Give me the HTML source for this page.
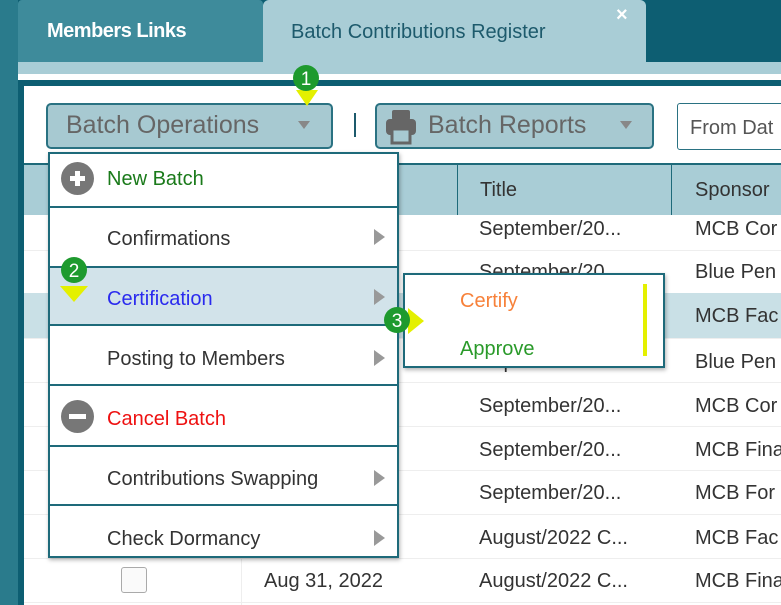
<!DOCTYPE html>
<html><head><style>
*{margin:0;padding:0;box-sizing:border-box}
body{width:781px;height:605px;overflow:hidden;position:relative;background:#0d5e72;font-family:"Liberation Sans",sans-serif}
.a{position:absolute}
.t{font-size:20px;color:#333;white-space:nowrap}
</style></head><body>
<div class="a" style="left:0;top:0;width:18px;height:605px;background:#2a7b8c"></div>
<div class="a" style="left:18px;top:0;width:245px;height:62px;background:#3e8b9b;border-radius:4px 4px 0 0"></div>
<div class="a" style="left:47px;top:20px;font-size:20px;font-weight:bold;color:#fff;letter-spacing:-0.5px">Members Links</div>
<div class="a" style="left:263px;top:0;width:383px;height:62px;background:#a9cdd6;border-radius:6px 6px 0 0"></div>
<div class="a" style="left:291px;top:21px;font-size:20px;color:#1d5a6c">Batch Contributions Register</div>
<div class="a" style="left:616px;top:4px;font-size:20px;color:#fff;font-weight:bold">×</div>
<div class="a" style="left:18px;top:62px;width:763px;height:12px;background:#a9cdd6"></div>
<div class="a" style="left:18px;top:74px;width:763px;height:6px;background:#fff"></div>
<div class="a" style="left:18px;top:80px;width:763px;height:525px;background:#fff;border-top:6px solid #0d5e72;border-left:6px solid #0d5e72;border-radius:6px 0 0 0"></div>
<!-- toolbar -->
<div class="a" style="left:46px;top:103px;width:287px;height:46px;background:#a7c9d1;border:2px solid #2a7282;border-radius:5px"></div>
<div class="a t" style="left:66px;top:111px;font-size:25px;color:#666">Batch Operations</div>
<div class="a" style="left:298px;top:121px;border-left:6px solid transparent;border-right:6px solid transparent;border-top:8px solid #888"></div>
<div class="a" style="left:354px;top:113px;width:2px;height:24px;background:#1d5a6c"></div>
<div class="a" style="left:375px;top:103px;width:279px;height:46px;background:#a7c9d1;border:2px solid #2a7282;border-radius:5px"></div>
<svg class="a" style="left:383px;top:107px" width="36" height="40" viewBox="0 0 36 40"><rect x="9" y="3" width="18" height="10" rx="2" fill="#666"/><rect x="3" y="12" width="30" height="16" rx="4" fill="#666"/><rect x="9" y="22" width="18" height="14" fill="#a7c9d1" stroke="#666" stroke-width="3"/></svg>
<div class="a t" style="left:428px;top:111px;font-size:25px;color:#666">Batch Reports</div>
<div class="a" style="left:620px;top:121px;border-left:6px solid transparent;border-right:6px solid transparent;border-top:8px solid #888"></div>
<div class="a" style="left:677px;top:103px;width:110px;height:47px;background:#fff;border:1px solid #2a7282;border-radius:3px"></div>
<div class="a t" style="left:690px;top:117px;color:#555">From Dat</div>
<!-- table header -->
<div class="a" style="left:24px;top:163px;width:757px;height:52px;background:#a9cdd6;border-top:2px solid #1e6a7a"></div>
<div class="a" style="left:457px;top:165px;width:1px;height:50px;background:#1e6a7a"></div>
<div class="a" style="left:671px;top:165px;width:1px;height:50px;background:#1e6a7a"></div>
<div class="a t" style="left:480px;top:179px">Title</div>
<div class="a t" style="left:695px;top:179px">Sponsor</div>
<!-- rows -->
<div class="a" style="left:24px;top:293px;width:757px;height:45px;background:#c9e0e6"></div>
<div class="a" style="left:24px;top:250px;width:757px;height:1px;background:#eee"></div>
<div class="a" style="left:24px;top:338px;width:757px;height:1px;background:#eee"></div>
<div class="a" style="left:24px;top:382px;width:757px;height:1px;background:#eee"></div>
<div class="a" style="left:24px;top:426px;width:757px;height:1px;background:#eee"></div>
<div class="a" style="left:24px;top:470px;width:757px;height:1px;background:#eee"></div>
<div class="a" style="left:24px;top:514px;width:757px;height:1px;background:#eee"></div>
<div class="a" style="left:24px;top:558px;width:757px;height:1px;background:#eee"></div>
<div class="a" style="left:24px;top:602px;width:757px;height:1px;background:#eee"></div>
<div class="a" style="left:241px;top:558px;width:1px;height:47px;background:#eee"></div>
<div class="a t" style="left:479px;top:218px">September/20...</div><div class="a t" style="left:695px;top:218px">MCB Cor</div>
<div class="a t" style="left:479px;top:261px">September/20...</div><div class="a t" style="left:695px;top:261px">Blue Pen</div>
<div class="a t" style="left:695px;top:305px">MCB Fac</div>
<div class="a t" style="left:479px;top:351px">September/20...</div><div class="a t" style="left:695px;top:351px">Blue Pen</div>
<div class="a t" style="left:479px;top:395px">September/20...</div><div class="a t" style="left:695px;top:395px">MCB Cor</div>
<div class="a t" style="left:479px;top:439px">September/20...</div><div class="a t" style="left:695px;top:439px">MCB Fina</div>
<div class="a t" style="left:479px;top:482px">September/20...</div><div class="a t" style="left:695px;top:482px">MCB For</div>
<div class="a t" style="left:479px;top:527px">August/2022 C...</div><div class="a t" style="left:695px;top:527px">MCB Fac</div>
<div class="a t" style="left:264px;top:570px">Aug 31, 2022</div>
<div class="a t" style="left:479px;top:570px">August/2022 C...</div><div class="a t" style="left:695px;top:570px">MCB Fina</div>
<div class="a" style="left:121px;top:567px;width:26px;height:26px;border:1px solid #aaa;border-radius:3px;background:#fafafa"></div>
<!-- menu -->
<div class="a" style="left:48px;top:152px;width:351px;height:406px;background:#fff;border:2px solid #1e6a7a;box-shadow:1px 2px 4px rgba(0,0,0,.3)"></div>
<div class="a" style="left:50px;top:268px;width:347px;height:56px;background:#d2e3ea"></div>
<div class="a" style="left:50px;top:206px;width:347px;height:2px;background:#1e6a7a"></div>
<div class="a" style="left:50px;top:266px;width:347px;height:2px;background:#1e6a7a"></div>
<div class="a" style="left:50px;top:324px;width:347px;height:2px;background:#1e6a7a"></div>
<div class="a" style="left:50px;top:384px;width:347px;height:2px;background:#1e6a7a"></div>
<div class="a" style="left:50px;top:445px;width:347px;height:2px;background:#1e6a7a"></div>
<div class="a" style="left:50px;top:504px;width:347px;height:2px;background:#1e6a7a"></div>
<div class="a" style="left:61px;top:162px;width:33px;height:33px;border-radius:50%;background:#777"></div>
<div class="a" style="left:70px;top:176px;width:15px;height:5px;background:#fff"></div>
<div class="a" style="left:75px;top:171px;width:5px;height:15px;background:#fff"></div>
<div class="a t" style="left:107px;top:168px;color:#1a7a1a">New Batch</div>
<div class="a t" style="left:107px;top:228px">Confirmations</div>
<div class="a t" style="left:107px;top:288px;color:#2a2aee">Certification</div>
<div class="a t" style="left:107px;top:348px">Posting to Members</div>
<div class="a" style="left:61px;top:400px;width:33px;height:33px;border-radius:50%;background:#777"></div>
<div class="a" style="left:69px;top:414px;width:17px;height:5px;background:#fff"></div>
<div class="a t" style="left:107px;top:408px;color:#ee1111">Cancel Batch</div>
<div class="a t" style="left:107px;top:468px">Contributions Swapping</div>
<div class="a t" style="left:107px;top:528px">Check Dormancy</div>
<div class="a" style="left:374px;top:229px;border-top:8px solid transparent;border-bottom:8px solid transparent;border-left:11px solid #999"></div>
<div class="a" style="left:374px;top:289px;border-top:8px solid transparent;border-bottom:8px solid transparent;border-left:11px solid #999"></div>
<div class="a" style="left:374px;top:350px;border-top:8px solid transparent;border-bottom:8px solid transparent;border-left:11px solid #999"></div>
<div class="a" style="left:374px;top:470px;border-top:8px solid transparent;border-bottom:8px solid transparent;border-left:11px solid #999"></div>
<div class="a" style="left:374px;top:530px;border-top:8px solid transparent;border-bottom:8px solid transparent;border-left:11px solid #999"></div>
<!-- submenu -->
<div class="a" style="left:403px;top:273px;width:262px;height:95px;background:#fff;border:2px solid #1e6a7a;box-shadow:1px 2px 4px rgba(0,0,0,.3)"></div>
<div class="a t" style="left:460px;top:290px;color:#f7813a">Certify</div>
<div class="a t" style="left:460px;top:338px;color:#2a9a2a">Approve</div>
<div class="a" style="left:643px;top:284px;width:4px;height:72px;background:#e4f000"></div>
<!-- badges -->
<svg class="a" style="left:290px;top:62px" width="34" height="56"><path d="M6 28 L28 28 L17 44 Z" fill="#e4f000"/><circle cx="16" cy="16" r="13" fill="#1e9a2e"/><text x="16" y="23" font-size="19" fill="#fff" text-anchor="middle" font-family="Liberation Sans">1</text></svg>
<svg class="a" style="left:57px;top:254px" width="34" height="56"><path d="M3 32 L31 32 L17 48 Z" fill="#e4f000"/><circle cx="17" cy="16" r="13" fill="#1e9a2e"/><text x="17" y="23" font-size="19" fill="#fff" text-anchor="middle" font-family="Liberation Sans">2</text></svg>
<svg class="a" style="left:380px;top:303px" width="56" height="34"><path d="M28 5 L44 18 L28 31 Z" fill="#e4f000"/><circle cx="17" cy="17" r="13" fill="#1e9a2e"/><text x="17" y="24" font-size="19" fill="#fff" text-anchor="middle" font-family="Liberation Sans">3</text></svg>
</body></html>
